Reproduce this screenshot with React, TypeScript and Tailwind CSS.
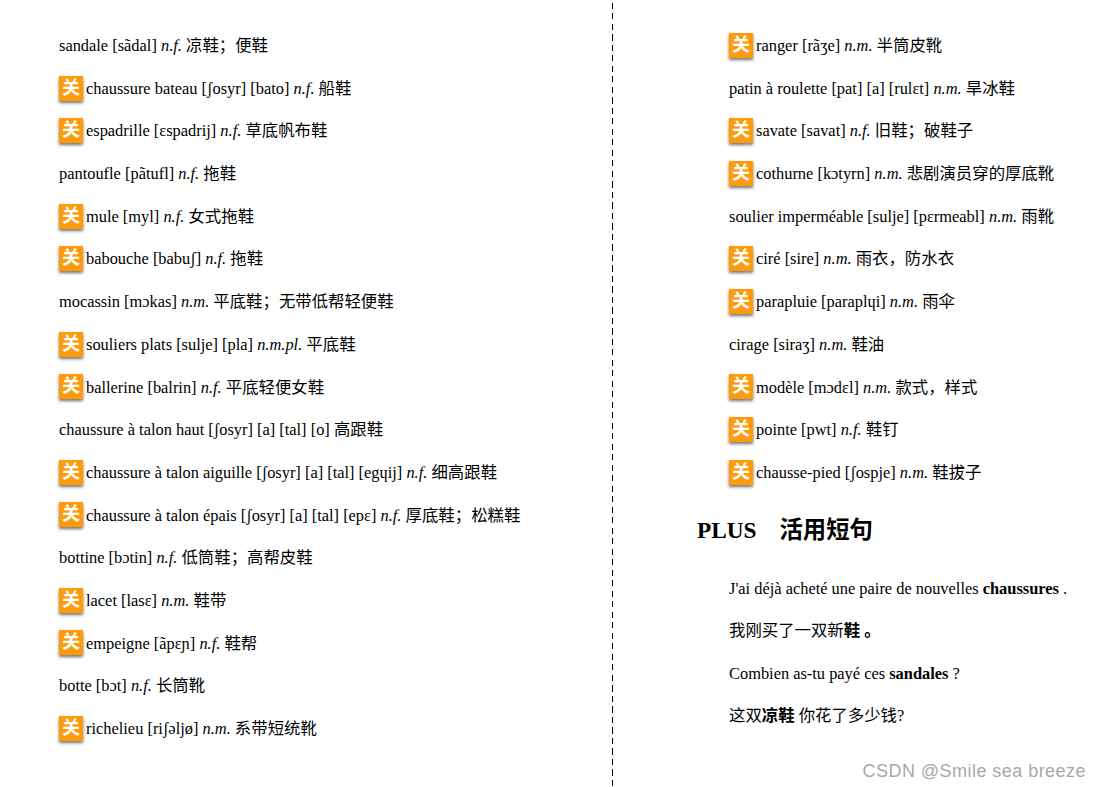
const leftRows: [boolean, string, string, string][] = [
  [false, 'sandale [sãdal]', 'n.f.', '凉鞋；便鞋'],
  [true, 'chaussure bateau [ʃosyr] [bato]', 'n.f.', '船鞋'],
  [true, 'espadrille [ɛspadrij]', 'n.f.', '草底帆布鞋'],
  [false, 'pantoufle [pãtufl]', 'n.f.', '拖鞋'],
  [true, 'mule [myl]', 'n.f.', '女式拖鞋'],
  [true, 'babouche [babuʃ]', 'n.f.', '拖鞋'],
  [false, 'mocassin [mɔkas]', 'n.m.', '平底鞋；无带低帮轻便鞋'],
  [true, 'souliers plats [sulje] [pla]', 'n.m.pl.', '平底鞋'],
  [true, 'ballerine [balrin]', 'n.f.', '平底轻便女鞋'],
  [false, 'chaussure à talon haut [ʃosyr] [a] [tal] [o]', '', '高跟鞋'],
  [true, 'chaussure à talon aiguille [ʃosyr] [a] [tal] [egɥij]', 'n.f.', '细高跟鞋'],
  [true, 'chaussure à talon épais [ʃosyr] [a] [tal] [epɛ]', 'n.f.', '厚底鞋；松糕鞋'],
  [false, 'bottine [bɔtin]', 'n.f.', '低筒鞋；高帮皮鞋'],
  [true, 'lacet [lasɛ]', 'n.m.', '鞋带'],
  [true, 'empeigne [ãpɛɲ]', 'n.f.', '鞋帮'],
  [false, 'botte [bɔt]', 'n.f.', '长筒靴'],
  [true, 'richelieu [riʃəljø]', 'n.m.', '系带短统靴'],
]

const rightRows: [boolean, string, string, string][] = [
  [true, 'ranger [rãʒe]', 'n.m.', '半筒皮靴'],
  [false, 'patin à roulette [pat] [a] [rulɛt]', 'n.m.', '旱冰鞋'],
  [true, 'savate [savat]', 'n.f.', '旧鞋；破鞋子'],
  [true, 'cothurne [kɔtyrn]', 'n.m.', '悲剧演员穿的厚底靴'],
  [false, 'soulier imperméable [sulje] [pɛrmeabl]', 'n.m.', '雨靴'],
  [true, 'ciré [sire]', 'n.m.', '雨衣，防水衣'],
  [true, 'parapluie [paraplɥi]', 'n.m.', '雨伞'],
  [false, 'cirage [siraʒ]', 'n.m.', '鞋油'],
  [true, 'modèle [mɔdɛl]', 'n.m.', '款式，样式'],
  [true, 'pointe [pwt]', 'n.f.', '鞋钉'],
  [true, 'chausse-pied [ʃospje]', 'n.m.', '鞋拔子'],
]

function Badge() {
  return (
    <span className="mr-[3px] flex h-[25px] w-[24px] shrink-0 items-center justify-center bg-[#ff9a0a] text-[18px] font-bold text-white shadow-[0_2px_3px_rgba(0,0,0,0.55)]">
      关
    </span>
  )
}

function Row({ row }: { row: [boolean, string, string, string] }) {
  const [badge, word, kind, meaning] = row
  return (
    <div className="flex h-[42.7px] items-center whitespace-pre">
      {badge && <Badge />}
      <span className="pt-[2px]">
        {word} {kind && <i>{kind} </i>}
        {meaning}
      </span>
    </div>
  )
}

export default function App() {
  return (
    <div className="flex h-[787px] w-[1100px] overflow-hidden bg-white text-[16.4px] text-black font-['Liberation_Serif','Noto_Sans_CJK_SC',serif]">
      <div className="w-[612px] shrink-0 pl-[59px] pt-[24px]">
        {leftRows.map((row) => (
          <Row key={row[1]} row={row} />
        ))}
      </div>
      <div className="h-full w-px shrink-0 bg-[repeating-linear-gradient(to_bottom,#000_0,#000_6px,transparent_6px,transparent_10.5px)] bg-[position:0_3px]" />
      <div className="relative flex-1 pt-[24px]">
        <div className="pl-[116px]">
          {rightRows.map((row) => (
            <Row key={row[1]} row={row} />
          ))}
        </div>
        <h2 className="mt-[19px] flex h-[36px] items-center pl-[84px] text-[23.3px] font-bold">
          <span>PLUS</span>
          <span className="ml-[23px]">活用短句</span>
        </h2>
        <div className="mt-[18px] pl-[116px]">
          <p className="flex h-[42.7px] items-center whitespace-pre">
            <span className="pt-[2px]">J'ai déjà acheté une paire de nouvelles <b>chaussures</b> .</span>
          </p>
          <p className="flex h-[42.7px] items-center whitespace-pre">
            <span className="pt-[2px]">我刚买了一双新<b>鞋 。</b></span>
          </p>
          <p className="flex h-[42.7px] items-center whitespace-pre">
            <span className="pt-[2px]">Combien as-tu payé ces <b>sandales</b> ?</span>
          </p>
          <p className="flex h-[42.7px] items-center whitespace-pre">
            <span>这双<b>凉鞋</b> 你花了多少钱?</span>
          </p>
        </div>
        <span className="absolute bottom-[2px] right-[14px] font-['Liberation_Sans',sans-serif] text-[18px] tracking-[0.46px] text-[#a8a8a8]">
          CSDN @Smile sea breeze
        </span>
      </div>
    </div>
  )
}
